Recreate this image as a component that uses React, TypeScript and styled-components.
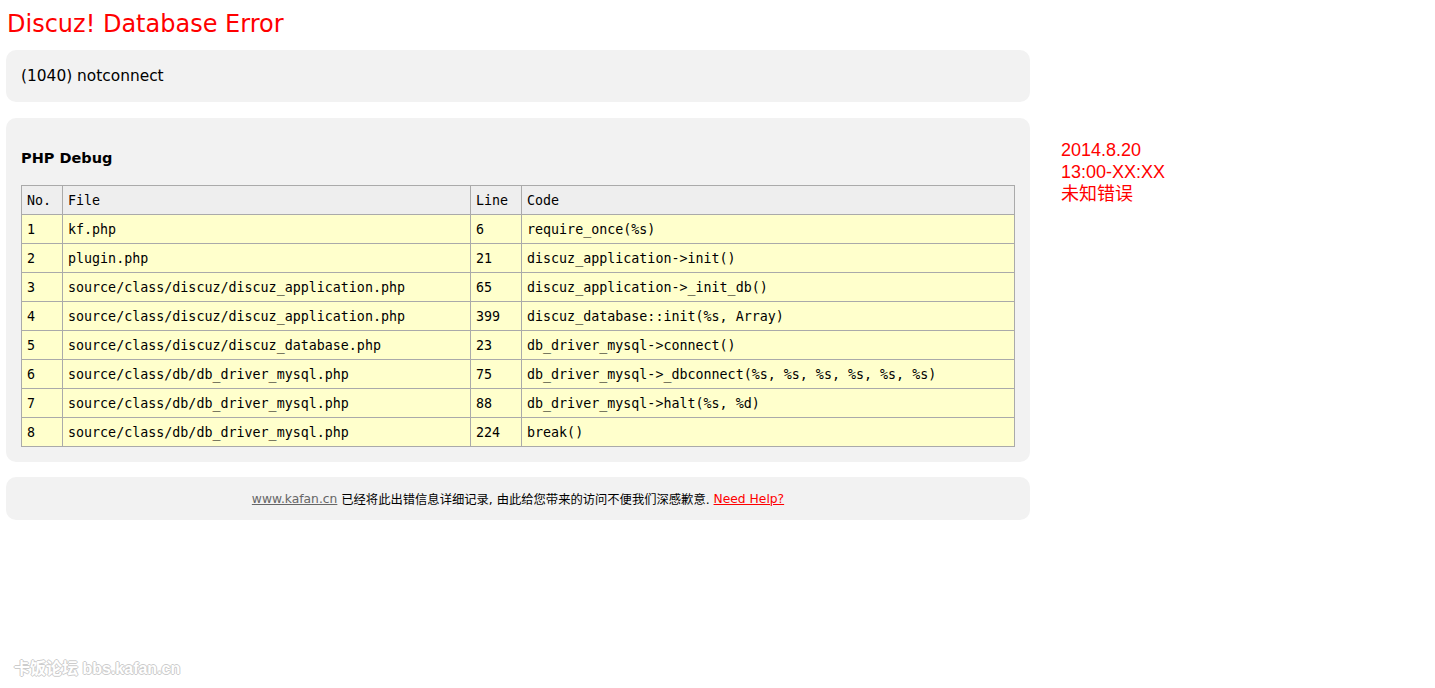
import { createGlobalStyle, styled } from "styled-components";

const GlobalStyle = createGlobalStyle`
  html, body {
    margin: 0;
    padding: 0;
    background: #fff;
  }
  body {
    font-family: "DejaVu Sans", Verdana, sans-serif;
    color: #000;
  }
`;

const traces = [
  { no: 1, file: "kf.php", line: 6, code: "require_once(%s)" },
  { no: 2, file: "plugin.php", line: 21, code: "discuz_application->init()" },
  { no: 3, file: "source/class/discuz/discuz_application.php", line: 65, code: "discuz_application->_init_db()" },
  { no: 4, file: "source/class/discuz/discuz_application.php", line: 399, code: "discuz_database::init(%s, Array)" },
  { no: 5, file: "source/class/discuz/discuz_database.php", line: 23, code: "db_driver_mysql->connect()" },
  { no: 6, file: "source/class/db/db_driver_mysql.php", line: 75, code: "db_driver_mysql->_dbconnect(%s, %s, %s, %s, %s, %s)" },
  { no: 7, file: "source/class/db/db_driver_mysql.php", line: 88, code: "db_driver_mysql->halt(%s, %d)" },
  { no: 8, file: "source/class/db/db_driver_mysql.php", line: 224, code: "break()" },
];

export default function App() {
  return (
    <>
      <GlobalStyle />
      <Page>
        <Title>Discuz! Database Error</Title>
        <MessageBox>(1040) notconnect</MessageBox>
        <DebugBox>
          <DebugTitle>PHP Debug</DebugTitle>
          <Table>
            <colgroup>
              <col style={{ width: 41 }} />
              <col style={{ width: 408 }} />
              <col style={{ width: 51 }} />
              <col />
            </colgroup>
            <thead>
              <tr>
                <Th>No.</Th>
                <Th>File</Th>
                <Th>Line</Th>
                <Th>Code</Th>
              </tr>
            </thead>
            <tbody>
              {traces.map((t) => (
                <tr key={t.no}>
                  <Td>{t.no}</Td>
                  <Td>{t.file}</Td>
                  <Td>{t.line}</Td>
                  <Td>{t.code}</Td>
                </tr>
              ))}
            </tbody>
          </Table>
        </DebugBox>
        <FooterBox>
          <SiteLink href="#">www.kafan.cn</SiteLink> 已经将此出错信息详细记录, 由此给您带来的访问不便我们深感歉意.{" "}
          <HelpLink href="#">Need Help?</HelpLink>
        </FooterBox>
      </Page>
      <Notice>
        2014.8.20
        <br />
        13:00-XX:XX
        <br />
        未知错误
      </Notice>
      <Watermark>卡饭论坛 bbs.kafan.cn</Watermark>
    </>
  );
}

const Page = styled.div`
  width: 1024px;
  padding: 0 6px 20px;
`;

const Title = styled.h1`
  margin: 7px 0 0 1px;
  height: 43px;
  font-size: 24px;
  line-height: 34px;
  font-weight: normal;
  color: #f00;
`;

const Box = styled.div`
  background: #f2f2f2;
  border-radius: 10px;
  margin-bottom: 16px;
`;

const MessageBox = styled(Box)`
  display: flex;
  align-items: center;
  height: 52px;
  padding: 0 15px;
  font-size: 15.4px;
`;

const DebugBox = styled(Box)`
  padding: 15px 15px 15px;
  margin-bottom: 15px;
`;

const DebugTitle = styled.h3`
  margin: 15px 0 17px;
  font-size: 14.5px;
  line-height: 20px;
  font-weight: bold;
`;

const Table = styled.table`
  width: 100%;
  border-collapse: collapse;
  table-layout: fixed;
  font-family: "DejaVu Sans Mono", Consolas, monospace;
  font-size: 13.33px;
`;

const Th = styled.th`
  height: 28px;
  padding: 0 5px;
  border: 1px solid #aaa;
  background: #eee;
  text-align: left;
  font-weight: normal;
`;

const Td = styled.td`
  height: 28px;
  padding: 0 5px;
  border: 1px solid #aaa;
  background: #ffc;
  white-space: nowrap;
`;

const FooterBox = styled(Box)`
  display: flex;
  align-items: center;
  justify-content: center;
  height: 43px;
  font-family: "DejaVu Sans", "Noto Sans CJK SC", sans-serif;
  font-size: 12.3px;
  white-space: pre;
`;

const SiteLink = styled.a`
  color: #666;
  text-decoration: underline;
`;

const HelpLink = styled.a`
  color: #f00;
  text-decoration: underline;
`;

const Notice = styled.div`
  position: absolute;
  left: 1061px;
  top: 139px;
  font-family: "Liberation Sans", Arial, "Noto Sans CJK SC", sans-serif;
  font-size: 18px;
  line-height: 22px;
  color: #f00;
`;

const Watermark = styled.div`
  position: absolute;
  left: 14px;
  top: 655px;
  font-family: "Liberation Sans", Arial, "Noto Sans CJK SC", sans-serif;
  font-size: 16px;
  font-weight: bold;
  color: #fff;
  text-shadow: 1px 0 0 #ccc, -1px 0 0 #ccc, 0 1px 0 #ccc, 0 -1px 0 #ccc;
`;
